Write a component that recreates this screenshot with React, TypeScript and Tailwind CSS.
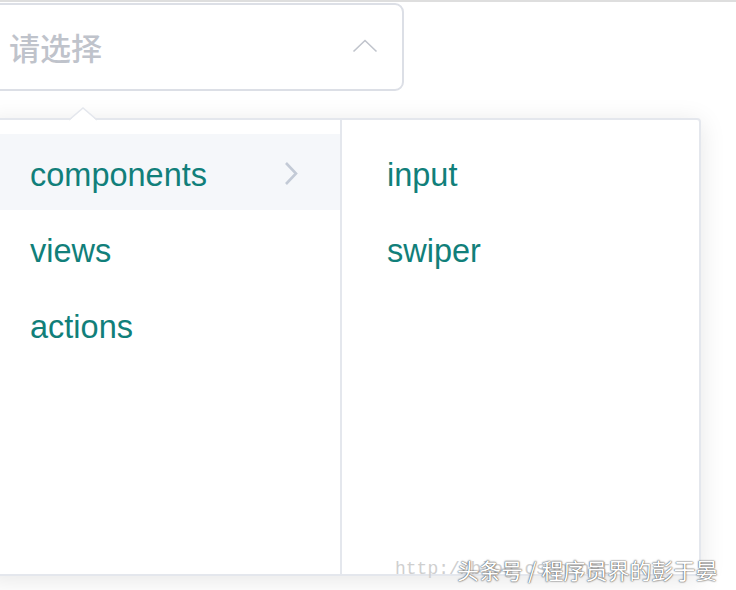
import React from "react";

export default function App() {
  const teal = "text-[#117f7a]";
  return (
    <div className="relative w-[736px] h-[590px] overflow-hidden bg-white" style={{ fontFamily: '"Liberation Sans", Arial, "Noto Sans CJK SC", sans-serif' }}>
      <div className="h-[2px] bg-[#dedede]" />
      <div className="mt-[1px] ml-[-22px] w-[426px] h-[88px] rounded-[9px] border-2 border-[#dcdfe6] flex items-center justify-between pl-[29px] pr-[24px]">
        <span className="text-[31px] text-[#bfc3cb] font-medium" style={{ fontFamily: '"Noto Sans CJK SC", sans-serif' }}>请选择</span>
        <svg width="26" height="14" viewBox="0 0 26 14" className="mt-[-2px]">
          <polyline points="1.5,12.5 13,1.5 24.5,12.5" fill="none" stroke="#c0c4cc" strokeWidth="1.6" />
        </svg>
      </div>
      <div className="relative mt-[27px] ml-[-15px] w-[716px] h-[458px] border-2 border-[#e4e7ed] rounded-[4px] bg-white shadow-[0_4px_26px_rgba(0,0,0,0.1)] flex">
        <svg width="28" height="14" viewBox="0 0 28 14" className="absolute top-[-13px] left-[82px]">
          <polygon points="0,14 14,1 28,14" fill="white" />
          <polyline points="0,13 14,1 28,13" fill="none" stroke="#e4e7ed" strokeWidth="1.5" />
        </svg>
        <div className="w-[355px] h-full border-r-2 border-[#e4e7ed] pt-[14px]">
          <div className="h-[76px] bg-[#f5f7fa] flex items-center justify-between pl-[43px] pr-[42px]">
            <span className={`text-[32.5px] pt-[6px] ${teal}`}>components</span>
            <svg width="14" height="25" viewBox="0 0 14 25" className="mt-[2px]">
              <polyline points="2,2 12,12.5 2,23" fill="none" stroke="#c3cad6" strokeWidth="2.6" />
            </svg>
          </div>
          <div className="h-[76px] flex items-center pl-[43px]">
            <span className={`text-[32.5px] pt-[6px] ${teal}`}>views</span>
          </div>
          <div className="h-[76px] flex items-center pl-[43px]">
            <span className={`text-[32.5px] pt-[6px] ${teal}`}>actions</span>
          </div>
        </div>
        <div className="flex-1 h-full pt-[14px]">
          <div className="h-[76px] flex items-center pl-[45px]">
            <span className={`text-[32.5px] pt-[6px] ${teal}`}>input</span>
          </div>
          <div className="h-[76px] flex items-center pl-[45px]">
            <span className={`text-[32.5px] pt-[6px] ${teal}`}>swiper</span>
          </div>
        </div>
      </div>
      <div className="absolute left-[395px] top-[557px] text-[18px] text-[#cfcfcf] leading-[24px]" style={{ fontFamily: '"Liberation Mono", monospace' }}>
        http://blog.csdn.net/
      </div>
      <div className="absolute left-[457px] top-[555px] text-[22px] leading-[28px] text-white [text-shadow:0_0_2px_#555,0_0_1px_#333]" style={{ fontFamily: '"Noto Sans CJK SC", sans-serif' }}>
        头条号 / 程序员界的彭于晏
      </div>
    </div>
  );
}
